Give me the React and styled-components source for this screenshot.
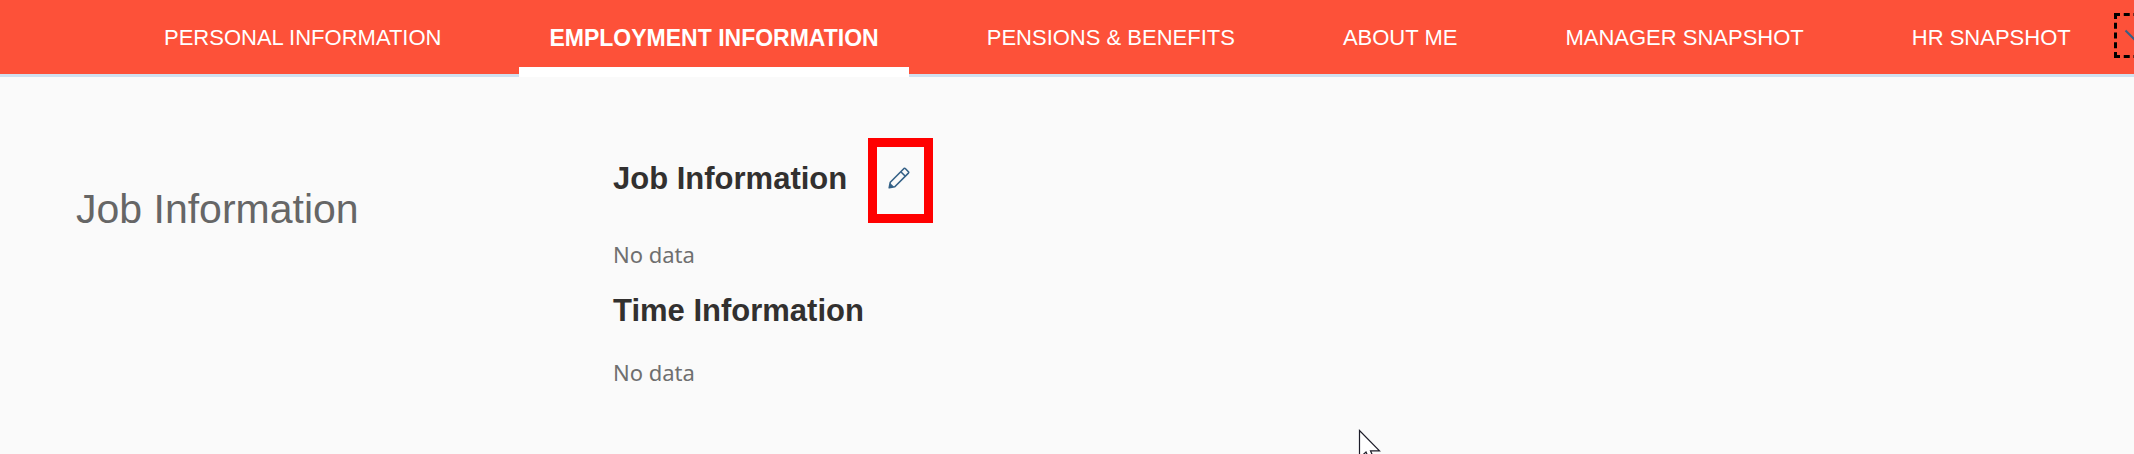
import React, { useState } from "react";
import styled, { createGlobalStyle } from "styled-components";

const GlobalStyle = createGlobalStyle`
  * {
    box-sizing: border-box;
  }
  body {
    margin: 0;
    background: #fafafa;
    font-family: "Liberation Sans", Arial, sans-serif;
  }
`;
const Page = styled.div`
  min-height: 100vh;
  overflow: hidden;
  background: #fafafa;
`;
const NavBar = styled.nav`
  display: flex;
  align-items: center;
  gap: 48px;
  height: 77px;
  padding-left: 134px;
  overflow: hidden;
  background: #fd5139;
  box-shadow: inset 0 -3px 0 #d0e0ef;
`;
const Tab = styled.button`
  flex: none;
  height: 77px;
  padding: 8px 30px 0;
  border: none;
  border-bottom: 10px solid ${(props) => (props.$active ? "#fff" : "transparent")};
  background: none;
  font-family: "Liberation Sans", Arial, sans-serif;
  font-weight: ${(props) => (props.$active ? 700 : 400)};
  font-size: ${(props) => (props.$active ? "23px" : "22px")};
  line-height: 26px;
  white-space: nowrap;
  color: #fff;
  cursor: pointer;
`;
const MoreButton = styled.button`
  display: flex;
  flex: none;
  align-items: center;
  justify-content: center;
  width: 45px;
  height: 45px;
  margin: 0 0 6px -35px;
  padding: 0;
  border: 3px dashed #000;
  background: none;
  color: #346187;
`;
const Content = styled.main`
  display: grid;
  grid-template-columns: 537px 1fr;
  padding: 61px 76px 0;
`;
const SectionTitle = styled.h1`
  margin: 48px 0 0;
  font-weight: 400;
  font-size: 41px;
  line-height: 46px;
  color: #666;
`;
const HeadingRow = styled.div`
  display: flex;
  align-items: center;
  gap: 21px;
`;
const Heading = styled.h2`
  margin: 0;
  padding-bottom: 4px;
  font-weight: 700;
  font-size: 31px;
  line-height: 36px;
  color: #32302f;
`;
const EditButton = styled.button`
  display: flex;
  justify-content: center;
  width: 65px;
  height: 85px;
  padding: 20px 4px 0 0;
  border: 9px solid #f00;
  background: none;
  color: #346187;
  cursor: pointer;
`;
const Block = styled.section`
  margin-bottom: 24px;
`;
const NoData = styled.p`
  margin: ${(props) => (props.$spaced ? "24px" : "16px")} 0 0;
  font-family: "Noto Sans", sans-serif;
  font-size: 22px;
  line-height: 30px;
  color: #6f6f6f;
`;
const Pointer = styled.svg`
  position: fixed;
  left: 1358px;
  top: 429px;
  pointer-events: none;
`;

const tabs = [
  "PERSONAL INFORMATION",
  "EMPLOYMENT INFORMATION",
  "PENSIONS & BENEFITS",
  "ABOUT ME",
  "MANAGER SNAPSHOT",
  "HR SNAPSHOT",
];

export default function EmployeeProfile() {
  const [activeTab, setActiveTab] = useState("EMPLOYMENT INFORMATION");

  return (
    <>
      <GlobalStyle />
      <Page>
        <NavBar>
          {tabs.map((tab) => (
            <Tab key={tab} $active={tab === activeTab} onClick={() => setActiveTab(tab)}>
              {tab}
            </Tab>
          ))}
          <MoreButton aria-label="More sections">
            <svg width="24" height="14" viewBox="0 0 24 14" fill="none">
              <path d="M1.5 1.5L12 12L22.5 1.5" stroke="currentColor" strokeWidth="2" />
            </svg>
          </MoreButton>
        </NavBar>
        <Content>
          <SectionTitle>Job Information</SectionTitle>
          <div>
            <Block>
              <HeadingRow>
                <Heading>Job Information</Heading>
                <EditButton aria-label="Edit job information">
                  <svg width="22" height="22" viewBox="0 0 22 22" fill="none">
                    <path
                      d="M1.2 20.8L2.3 15.2L16 1.5Q16.8 1 17.5 1.7L20.4 4.7Q21 5.4 20.4 6.1L6.8 19.7Z"
                      stroke="currentColor"
                      strokeWidth="1.6"
                      strokeLinejoin="round"
                    />
                    <path d="M12.8 4.7L17.3 9.2" stroke="currentColor" strokeWidth="1.6" />
                    <path d="M1 21L2.2 16L6 19.8Z" fill="currentColor" />
                  </svg>
                </EditButton>
              </HeadingRow>
              <NoData>No data</NoData>
            </Block>
            <Block>
              <Heading>Time Information</Heading>
              <NoData $spaced>No data</NoData>
            </Block>
          </div>
        </Content>
        <Pointer width="24" height="34" viewBox="0 0 24 34">
          <path
            d="M1.5 1.5V29L8 23L12 32L16 30L12.5 21.8H21.5Z"
            fill="#fff"
            stroke="#1c1c28"
            strokeWidth="1.2"
          />
        </Pointer>
      </Page>
    </>
  );
}
